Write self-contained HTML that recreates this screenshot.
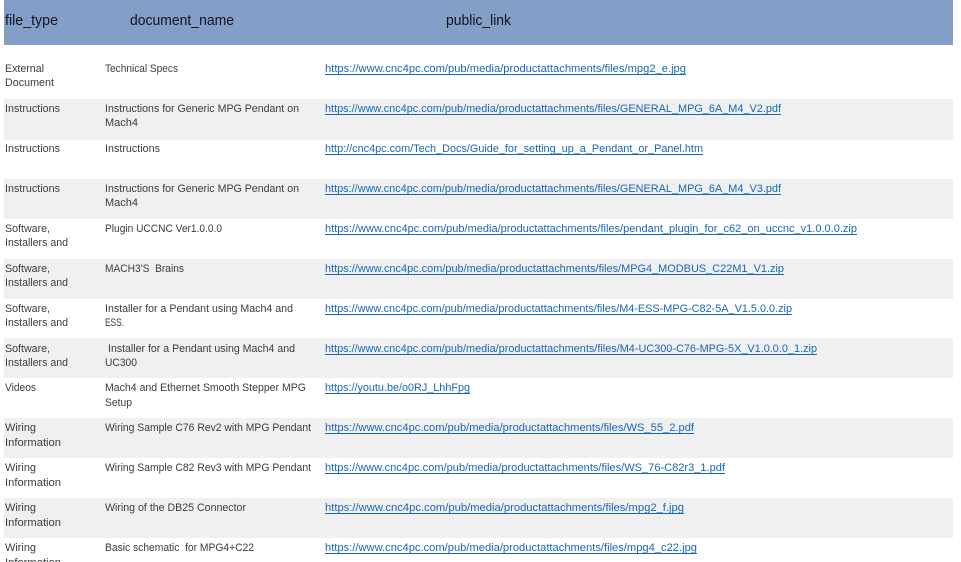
<!DOCTYPE html>
<html><head><meta charset="utf-8"><style>
html,body{margin:0;padding:0;background:#fff;width:961px;height:562px;overflow:hidden}
svg{display:block;position:absolute;left:0;top:0}
text{font-family:"Liberation Sans",sans-serif;white-space:pre}
.t{font-size:11px;fill:#3c3c3c}
.h{font-size:15px;fill:#10141a}
.l{font-size:11px;fill:#1567bb}
line{stroke:#1464b8;stroke-width:1}
#c{filter:blur(.3px)}
</style></head><body>
<svg width="961" height="562" viewBox="0 0 961 562" xmlns="http://www.w3.org/2000/svg">
<rect x="4" y="0" width="949" height="45" fill="#839fc8"/>
<g fill="#f0f0f0">
<rect x="4" y="99" width="949" height="41"/>
<rect x="4" y="179" width="949" height="40"/>
<rect x="4" y="259" width="949" height="40"/>
<rect x="4" y="338" width="949" height="40"/>
<rect x="4" y="418" width="949" height="40"/>
<rect x="4" y="498" width="949" height="40"/>
</g>
<g id="c">
<text class="h" x="5" y="25" textLength="53" lengthAdjust="spacingAndGlyphs">file_type</text>
<text class="h" x="130" y="25" textLength="104" lengthAdjust="spacingAndGlyphs">document_name</text>
<text class="h" x="446" y="25" textLength="65" lengthAdjust="spacingAndGlyphs">public_link</text>

<text class="t" x="5" y="72" textLength="39" lengthAdjust="spacingAndGlyphs">External</text>
<text class="t" x="5" y="86" textLength="49" lengthAdjust="spacingAndGlyphs">Document</text>
<text class="t" x="105" y="72" textLength="73" lengthAdjust="spacingAndGlyphs">Technical Specs</text>

<text class="t" x="5" y="112" textLength="55" lengthAdjust="spacingAndGlyphs">Instructions</text>
<text class="t" x="105" y="112" textLength="194" lengthAdjust="spacingAndGlyphs">Instructions for Generic MPG Pendant on</text>
<text class="t" x="105" y="126" textLength="33" lengthAdjust="spacingAndGlyphs">Mach4</text>

<text class="t" x="5" y="152" textLength="55" lengthAdjust="spacingAndGlyphs">Instructions</text>
<text class="t" x="105" y="152" textLength="55" lengthAdjust="spacingAndGlyphs">Instructions</text>

<text class="t" x="5" y="192" textLength="55" lengthAdjust="spacingAndGlyphs">Instructions</text>
<text class="t" x="105" y="192" textLength="194" lengthAdjust="spacingAndGlyphs">Instructions for Generic MPG Pendant on</text>
<text class="t" x="105" y="206" textLength="33" lengthAdjust="spacingAndGlyphs">Mach4</text>

<text class="t" x="5" y="232" textLength="45" lengthAdjust="spacingAndGlyphs">Software,</text>
<text class="t" x="5" y="246" textLength="63" lengthAdjust="spacingAndGlyphs">Installers and</text>
<text class="t" x="105" y="232" textLength="117" lengthAdjust="spacingAndGlyphs">Plugin UCCNC Ver1.0.0.0</text>

<text class="t" x="5" y="272" textLength="45" lengthAdjust="spacingAndGlyphs">Software,</text>
<text class="t" x="5" y="286" textLength="63" lengthAdjust="spacingAndGlyphs">Installers and</text>
<text class="t" x="105" y="272" textLength="79" lengthAdjust="spacingAndGlyphs">MACH3'S  Brains</text>

<text class="t" x="5" y="312" textLength="45" lengthAdjust="spacingAndGlyphs">Software,</text>
<text class="t" x="5" y="326" textLength="63" lengthAdjust="spacingAndGlyphs">Installers and</text>
<text class="t" x="105" y="312" textLength="188" lengthAdjust="spacingAndGlyphs">Installer for a Pendant using Mach4 and</text>
<text class="t" x="105" y="326" textLength="19" lengthAdjust="spacingAndGlyphs">ESS.</text>

<text class="t" x="5" y="352" textLength="45" lengthAdjust="spacingAndGlyphs">Software,</text>
<text class="t" x="5" y="366" textLength="63" lengthAdjust="spacingAndGlyphs">Installers and</text>
<text class="t" x="108" y="352" textLength="187" lengthAdjust="spacingAndGlyphs">Installer for a Pendant using Mach4 and</text>
<text class="t" x="105" y="366" textLength="32" lengthAdjust="spacingAndGlyphs">UC300</text>

<text class="t" x="5" y="391" textLength="31" lengthAdjust="spacingAndGlyphs">Videos</text>
<text class="t" x="105" y="391" textLength="201" lengthAdjust="spacingAndGlyphs">Mach4 and Ethernet Smooth Stepper MPG</text>
<text class="t" x="105" y="406" textLength="27" lengthAdjust="spacingAndGlyphs">Setup</text>

<text class="t" x="5" y="431" textLength="31" lengthAdjust="spacingAndGlyphs">Wiring</text>
<text class="t" x="5" y="446" textLength="56" lengthAdjust="spacingAndGlyphs">Information</text>
<text class="t" x="105" y="431" textLength="206" lengthAdjust="spacingAndGlyphs">Wiring Sample C76 Rev2 with MPG Pendant</text>

<text class="t" x="5" y="471" textLength="31" lengthAdjust="spacingAndGlyphs">Wiring</text>
<text class="t" x="5" y="486" textLength="56" lengthAdjust="spacingAndGlyphs">Information</text>
<text class="t" x="105" y="471" textLength="206" lengthAdjust="spacingAndGlyphs">Wiring Sample C82 Rev3 with MPG Pendant</text>

<text class="t" x="5" y="511" textLength="31" lengthAdjust="spacingAndGlyphs">Wiring</text>
<text class="t" x="5" y="526" textLength="56" lengthAdjust="spacingAndGlyphs">Information</text>
<text class="t" x="105" y="511" textLength="141" lengthAdjust="spacingAndGlyphs">Wiring of the DB25 Connector</text>

<text class="t" x="5" y="551" textLength="31" lengthAdjust="spacingAndGlyphs">Wiring</text>
<text class="t" x="5" y="566" textLength="56" lengthAdjust="spacingAndGlyphs">Information</text>
<text class="t" x="105" y="551" textLength="149" lengthAdjust="spacingAndGlyphs">Basic schematic  for MPG4+C22</text>

<text class="l" x="325" y="72" textLength="361" lengthAdjust="spacingAndGlyphs">https://www.cnc4pc.com/pub/media/productattachments/files/mpg2_e.jpg</text>
<line x1="325" x2="686" y1="74.5" y2="74.5"/>
<text class="l" x="325" y="112" textLength="456" lengthAdjust="spacingAndGlyphs">https://www.cnc4pc.com/pub/media/productattachments/files/GENERAL_MPG_6A_M4_V2.pdf</text>
<line x1="325" x2="781" y1="114.5" y2="114.5"/>
<text class="l" x="325" y="152" textLength="378" lengthAdjust="spacingAndGlyphs">http://cnc4pc.com/Tech_Docs/Guide_for_setting_up_a_Pendant_or_Panel.htm</text>
<line x1="325" x2="703" y1="154.5" y2="154.5"/>
<text class="l" x="325" y="192" textLength="456" lengthAdjust="spacingAndGlyphs">https://www.cnc4pc.com/pub/media/productattachments/files/GENERAL_MPG_6A_M4_V3.pdf</text>
<line x1="325" x2="781" y1="194.5" y2="194.5"/>
<text class="l" x="325" y="232" textLength="532" lengthAdjust="spacingAndGlyphs">https://www.cnc4pc.com/pub/media/productattachments/files/pendant_plugin_for_c62_on_uccnc_v1.0.0.0.zip</text>
<line x1="325" x2="857" y1="234.5" y2="234.5"/>
<text class="l" x="325" y="272" textLength="459" lengthAdjust="spacingAndGlyphs">https://www.cnc4pc.com/pub/media/productattachments/files/MPG4_MODBUS_C22M1_V1.zip</text>
<line x1="325" x2="784" y1="274.5" y2="274.5"/>
<text class="l" x="325" y="312" textLength="467" lengthAdjust="spacingAndGlyphs">https://www.cnc4pc.com/pub/media/productattachments/files/M4-ESS-MPG-C82-5A_V1.5.0.0.zip</text>
<line x1="325" x2="792" y1="314.5" y2="314.5"/>
<text class="l" x="325" y="352" textLength="492" lengthAdjust="spacingAndGlyphs">https://www.cnc4pc.com/pub/media/productattachments/files/M4-UC300-C76-MPG-5X_V1.0.0.0_1.zip</text>
<line x1="325" x2="817" y1="354.5" y2="354.5"/>
<text class="l" x="325" y="391" textLength="145" lengthAdjust="spacingAndGlyphs">https://youtu.be/o0RJ_LhhFpg</text>
<line x1="325" x2="470" y1="393.5" y2="393.5"/>
<text class="l" x="325" y="431" textLength="369" lengthAdjust="spacingAndGlyphs">https://www.cnc4pc.com/pub/media/productattachments/files/WS_55_2.pdf</text>
<line x1="325" x2="694" y1="433.5" y2="433.5"/>
<text class="l" x="325" y="471" textLength="400" lengthAdjust="spacingAndGlyphs">https://www.cnc4pc.com/pub/media/productattachments/files/WS_76-C82r3_1.pdf</text>
<line x1="325" x2="725" y1="473.5" y2="473.5"/>
<text class="l" x="325" y="511" textLength="359" lengthAdjust="spacingAndGlyphs">https://www.cnc4pc.com/pub/media/productattachments/files/mpg2_f.jpg</text>
<line x1="325" x2="684" y1="513.5" y2="513.5"/>
<text class="l" x="325" y="551" textLength="372" lengthAdjust="spacingAndGlyphs">https://www.cnc4pc.com/pub/media/productattachments/files/mpg4_c22.jpg</text>
<line x1="325" x2="697" y1="553.5" y2="553.5"/>
</g>
</svg>
</body></html>
